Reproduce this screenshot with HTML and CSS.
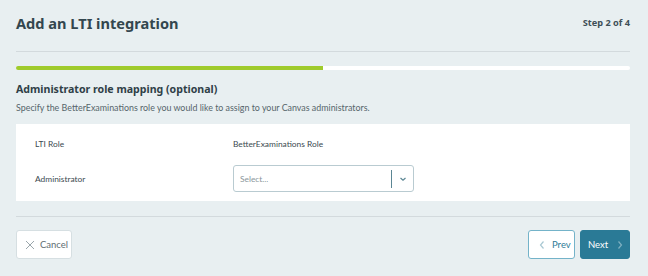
FILE: index.html
```html
<!DOCTYPE html>
<html lang="en">
<head>
    <meta charset="UTF-8">
    <meta name="viewport" content="width=device-width, initial-scale=1.0">
    <title>Add an LTI integration</title>
    <link rel="stylesheet" href="styles.css">
</head>
<body>
    <div class="wizard">
        <header class="wizard-header">
            <h1>Add an LTI integration</h1>
            <span class="step">Step 2 of 4</span>
        </header>

        <div class="progress"><div class="progress-fill" style="width: 50%"></div></div>

        <h2>Administrator role mapping (optional)</h2>
        <p class="hint">Specify the BetterExaminations role you would like to assign to your Canvas administrators.</p>

        <div class="card">
            <div class="row head">
                <div class="col">LTI Role</div>
                <div class="col">BetterExaminations Role</div>
            </div>
            <div class="row">
                <div class="col">Administrator</div>
                <div class="col">
                    <div class="select">
                        <span class="placeholder">Select...</span>
                        <span class="sep"></span>
                        <svg class="chev" width="10" height="10" viewBox="0 0 10 10"><path d="M2.5 4 L5 6.3 L7.5 4" fill="none" stroke="#5b8694" stroke-width="1.2"/></svg>
                    </div>
                </div>
            </div>
        </div>

        <footer class="wizard-footer">
            <button class="btn cancel">
                <svg width="10" height="10" viewBox="0 0 10 10"><path d="M1 1 L9 9 M9 1 L1 9" stroke="#9aa6ab" stroke-width="1"/></svg>
                Cancel
            </button>
            <div class="nav">
                <button class="btn prev">
                    <svg width="8" height="10" viewBox="0 0 8 10"><path d="M5.5 1.5 L2.5 5 L5.5 8.5" fill="none" stroke="#a9c8d3" stroke-width="1.2"/></svg>
                    Prev
                </button>
                <button class="btn next">
                    Next
                    <svg width="8" height="10" viewBox="0 0 8 10"><path d="M2.5 1.5 L5.5 5 L2.5 8.5" fill="none" stroke="#7fb0c1" stroke-width="1.2"/></svg>
                </button>
            </div>
        </footer>
    </div>
</body>
</html>
```

FILE: styles.css
```css
* { margin: 0; padding: 0; box-sizing: border-box; }
body { background-color: #e8eff1; font-family: "Lato", "Liberation Sans", sans-serif; color: #3c4a50; }
.wizard { padding: 0 18px 0 16px; }
.wizard-header { display: flex; justify-content: space-between; align-items: flex-start; height: 52px; border-bottom: 1px solid #d3dadd; padding-top: 13px; }
h1 { font-family: "Noto Sans", sans-serif; font-size: 14.6px; font-weight: 700; color: #33464e; }
.step { font-family: "Noto Sans", sans-serif; font-size: 9.2px; font-weight: 700; color: #3f5058; padding-top: 3px; }
.progress { margin-top: 14px; height: 4px; background: #fff; border-radius: 2px; overflow: hidden; }
.progress-fill { height: 100%; background: #9fcb2c; }
h2 { font-family: "Noto Sans", sans-serif; font-size: 10.6px; font-weight: 700; color: #2f4047; margin-top: 12px; }
.hint { font-size: 8.9px; color: #56656b; margin-top: 6px; }
.card { background: #fff; margin-top: 11px; padding: 13px 19px 9px; }
.row { display: flex; align-items: center; height: 27px; font-size: 8.4px; }
.row.head { height: 14px; margin-bottom: 14px; color: #3b4a50; }
.row .col:first-child { width: 198px; }
.select { width: 181px; height: 27px; border: 1px solid #b9cbd1; border-radius: 3px; display: flex; align-items: center; padding-left: 6px; }
.placeholder { flex: 1; color: #8a969b; font-size: 8.4px; }
.sep { width: 1px; height: 18px; background: #5b8694; }
.chev { margin: 0 5px 0 6px; }
.wizard-footer { margin-top: 15px; border-top: 1px solid #d3dadd; padding-top: 13px; display: flex; justify-content: space-between; }
.nav { display: flex; gap: 5px; }
.btn { height: 29px; border-radius: 3px; font-family: "Lato", sans-serif; font-size: 9.5px; display: flex; align-items: center; gap: 5px; cursor: pointer; }
.btn.cancel { width: 56px; background: #fff; border: 1px solid #d6dfe2; color: #5f6d72; padding-left: 8px; }
.btn.prev { width: 47px; background: #fff; border: 1px solid #74b3c9; color: #2f7c97; padding-left: 9px; gap: 6px; }
.btn.next { width: 50px; background: #2a7a96; border: 1px solid #2a7a96; color: #fff; padding-left: 7px; gap: 8px; }
```
